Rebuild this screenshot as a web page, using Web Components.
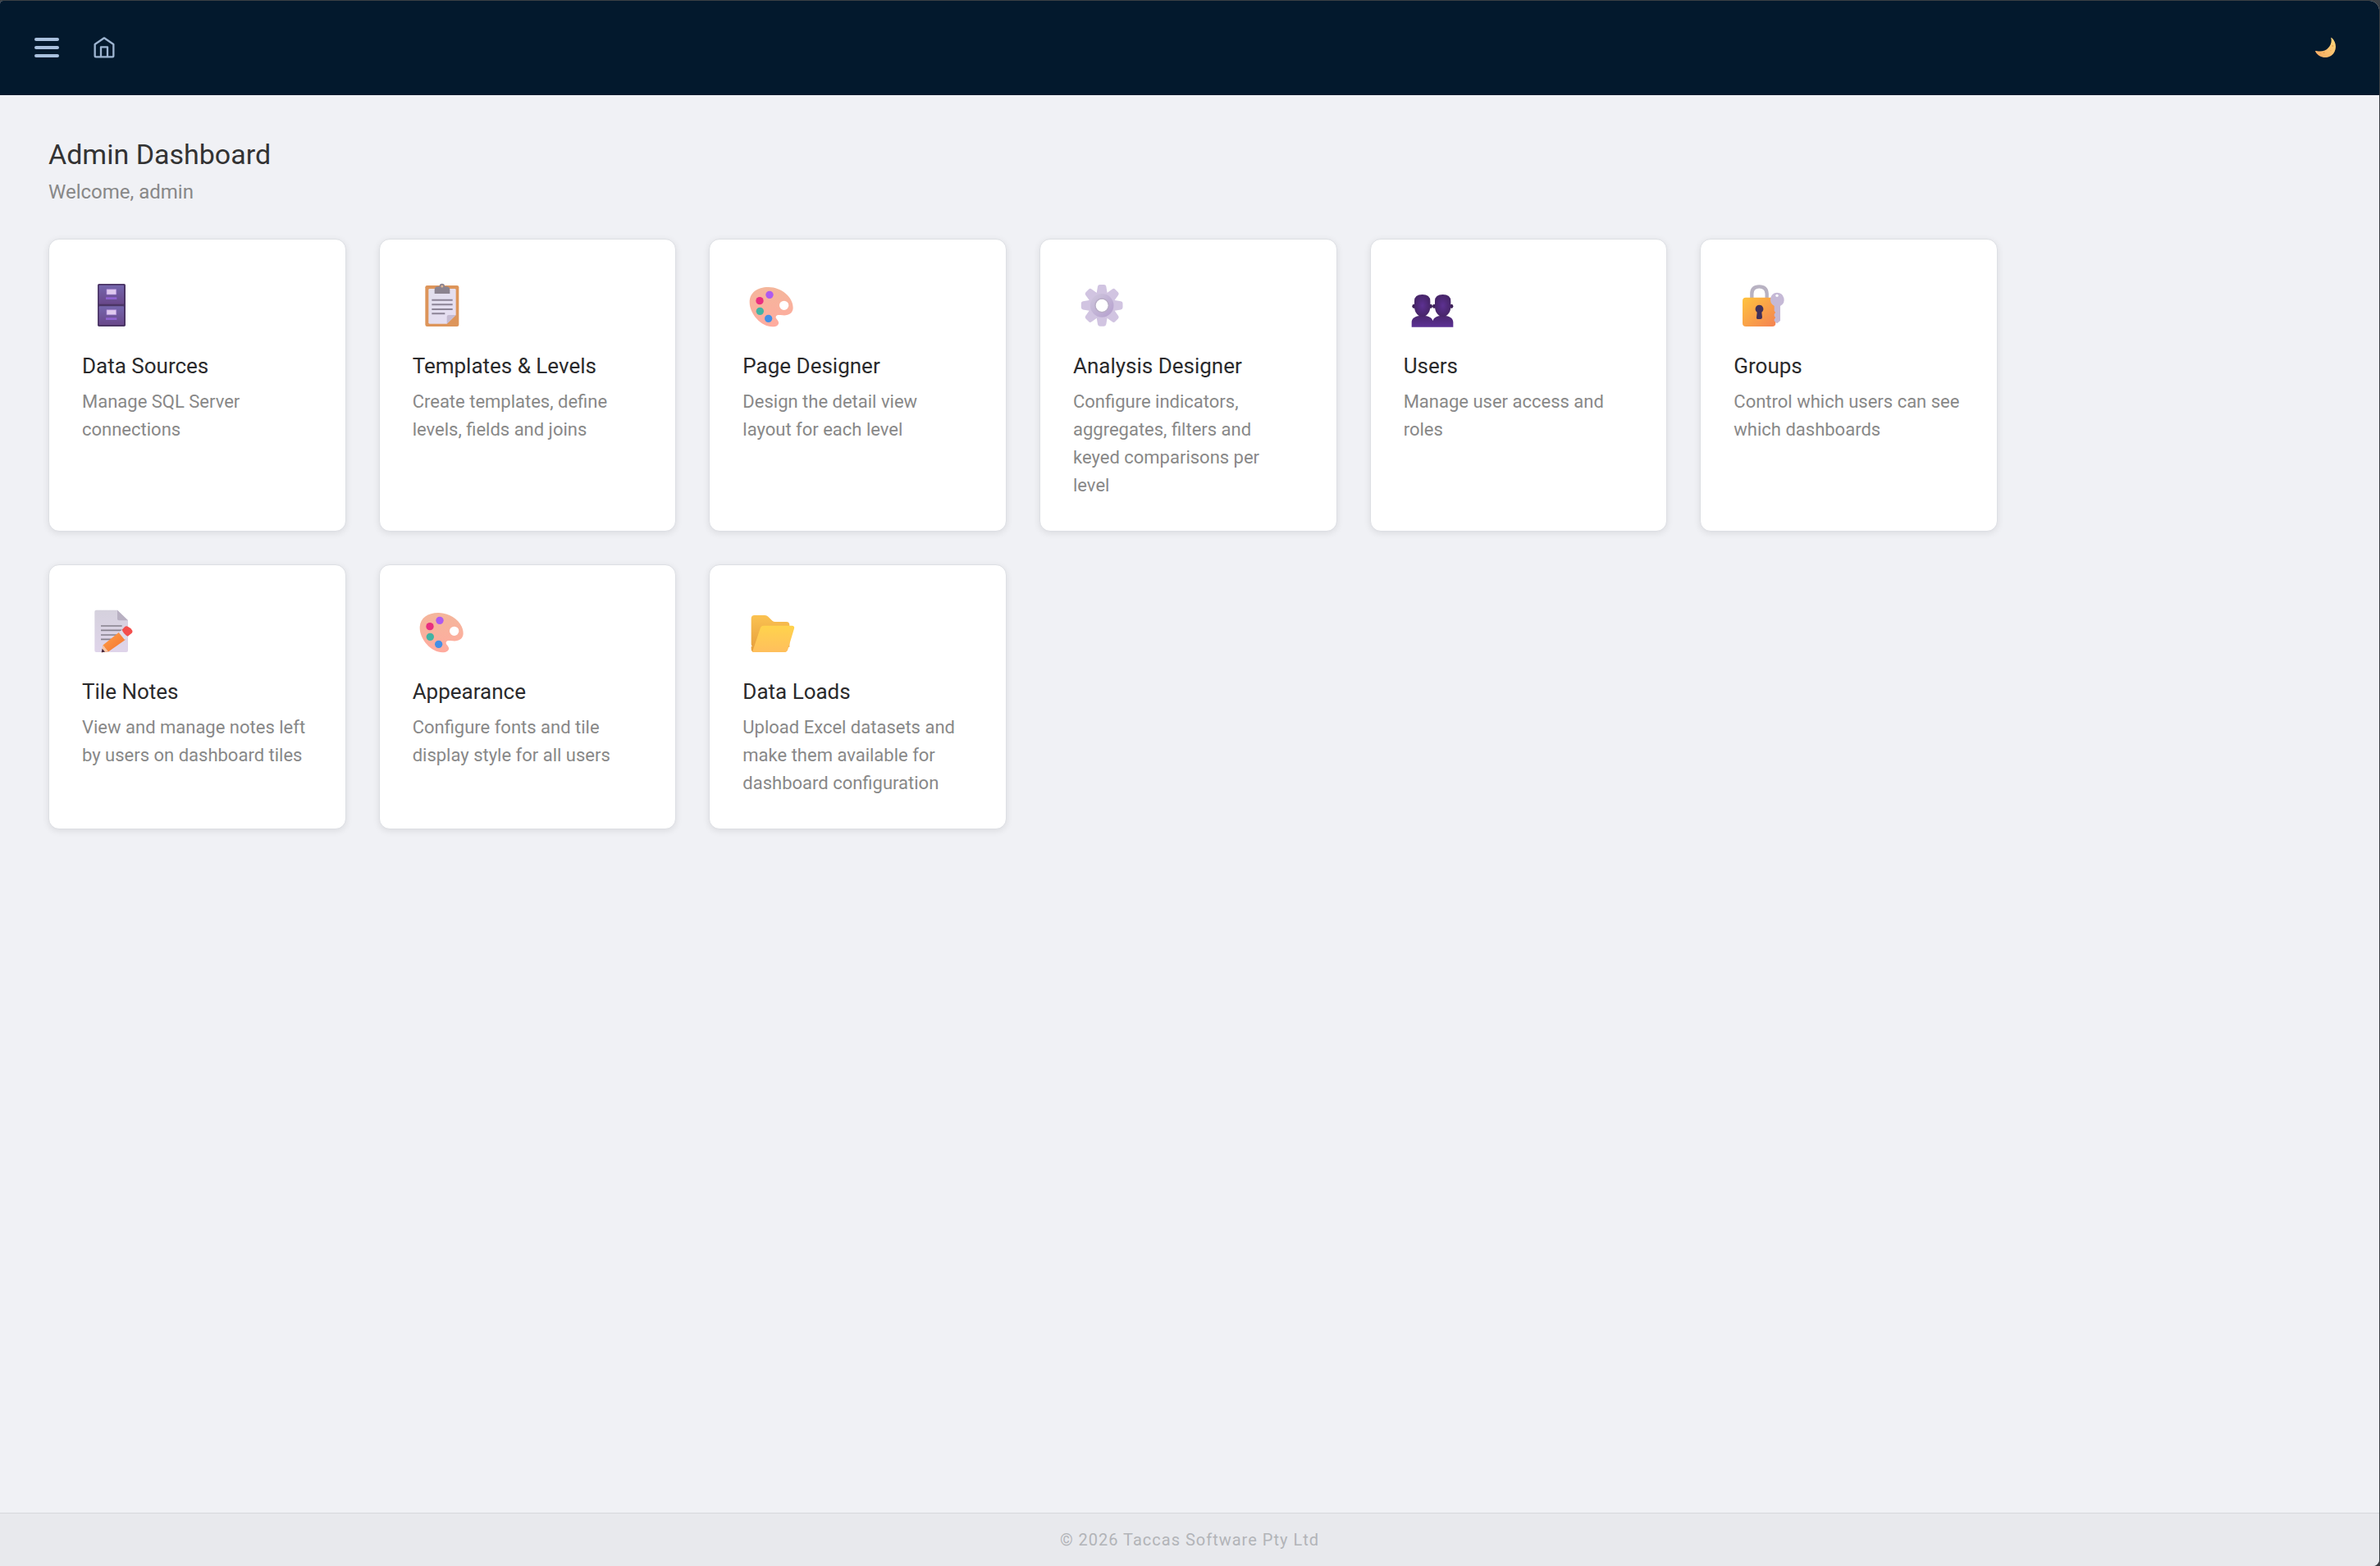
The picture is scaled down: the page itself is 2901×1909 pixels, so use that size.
<!DOCTYPE html>
<html lang="en">
<head>
<meta charset="utf-8">
<meta name="viewport" content="width=device-width, initial-scale=1">
<title>Admin Dashboard</title>
<style>
  :root {
    --color-bar: #03192d;
    --color-bar-icon: #a9c0dd;
    --color-page: #f0f1f5;
    --color-heading: #333;
    --color-muted: #888;
  }

  body {
    margin: 0;
    background: #3a3f44;
    font-family: Roboto, "Liberation Sans", sans-serif;
  }
</style>
</head>
<body>
  <app-shell>
    <app-bar slot="header"></app-bar>
    <page-heading>
      Admin Dashboard
      <span slot="subtitle">Welcome, admin</span>
    </page-heading>
    <tile-grid>
      <admin-tile icon="cabinet" href="#data-sources">Data Sources<span slot="text">Manage SQL Server connections</span></admin-tile>
      <admin-tile icon="clipboard" href="#templates">Templates &amp; Levels<span slot="text">Create templates, define levels, fields and joins</span></admin-tile>
      <admin-tile icon="palette" href="#page-designer">Page Designer<span slot="text">Design the detail view <br>layout for each level</span></admin-tile>
      <admin-tile icon="gear" href="#analysis-designer">Analysis Designer<span slot="text">Configure indicators, aggregates, filters and <br>keyed comparisons per <br>level</span></admin-tile>
      <admin-tile icon="users" href="#users">Users<span slot="text">Manage user access and roles</span></admin-tile>
      <admin-tile icon="lock" href="#groups">Groups<span slot="text">Control which users can see which dashboards</span></admin-tile>
      <admin-tile icon="memo" href="#tile-notes">Tile Notes<span slot="text">View and manage notes left by users on dashboard tiles</span></admin-tile>
      <admin-tile icon="palette" href="#appearance">Appearance<span slot="text">Configure fonts and tile display style for all users</span></admin-tile>
      <admin-tile icon="folder" href="#data-loads">Data Loads<span slot="text">Upload Excel datasets and make them available for dashboard configuration</span></admin-tile>
    </tile-grid>
    <app-footer slot="footer">© 2026 Taccas Software Pty Ltd</app-footer>
  </app-shell>

<script>
const ICONS = {
  cabinet: `
    <svg viewBox="150 153 216 240">
      <defs><linearGradient id="c" x2="0" y2="1"><stop stop-color="#7566ad"/><stop offset="1" stop-color="#69488a"/></linearGradient></defs>
      <rect x="207" y="195" width="102" height="156" rx="5" fill="#4b3565"/>
      <rect x="212" y="200" width="91" height="69" rx="3" fill="url(#c)"/>
      <rect x="212" y="277" width="91" height="68" rx="3" fill="url(#c)"/>
      <path d="M240 215h35v19h-35zM240 290h35v18h-35z" fill="#dfc9ef" stroke="#b08bdc" stroke-width="2"/>
      <path d="M237 248h40M237 323h40" stroke="#8f63d0" stroke-width="8"/>
    </svg>`,
  clipboard: `
    <svg viewBox="8 18 216 240">
      <defs><linearGradient id="p" x2="1" y2="1"><stop stop-color="#e2dfec"/><stop offset="1" stop-color="#e6def3"/></linearGradient></defs>
      <rect x="54" y="66" width="123" height="150" rx="7" fill="#dd955a"/>
      <path d="M70 78h92q4 0 4 4v92l-33 32H70q-4 0-4-4V82q0-4 4-4z" fill="url(#p)"/>
      <path d="M133 206v-26q0-6 6-6h27z" fill="#c5bbd2"/>
      <path d="M88 96V82q0-12 12-12h7a9 9 0 0 1 17 0h7q13 0 13 12v14z" fill="#8b838f"/>
      <circle cx="115.500" cy="69" r="7" fill="#e0b797" stroke="#8b838f" stroke-width="5"/>
      <path d="M78 119h76M78 136h76M78 153h76M78 169h48" stroke="#8c8496" stroke-width="6"/>
    </svg>`,
  palette: `
    <svg viewBox="16 18 216 240">
      <defs><linearGradient id="a" x2="0" y2="1"><stop stop-color="#f4b69b"/><stop offset="1" stop-color="#ffab9f"/></linearGradient></defs>
      <path fill="url(#a)" fill-rule="evenodd" d="M112 72C72 71 42 91 42 127c0 43 42 90 83 90 17 0 25-8 23-17-2-8-11-12-10-19 1-8 11-7 24-6 23 2 39-8 39-27 0-41-43-75-89-76zM168 122a17 17 0 1 1 0 34a17 17 0 1 1 0-34z"/>
      <circle cx="115" cy="100" r="14" fill="#ae5af0"/>
      <circle cx="79" cy="122" r="14" fill="#e92f80"/>
      <circle cx="80" cy="160" r="14" fill="#43b3a3"/>
      <circle cx="111" cy="187" r="14" fill="#438fe6"/>
    </svg>`,
  gear: `
    <svg viewBox="24 18 216 240">
      <defs>
        <linearGradient id="g" x2="1" y2="1"><stop stop-color="#cdc3dc"/><stop offset="1" stop-color="#b7a3cf"/></linearGradient>
        <path id="t" d="M108 106l6-36q1-7 8-7h15q7 0 8 7l6 36z"/>
      </defs>
      <g fill="#d1c4e1">
        <use href="#t"/><use href="#t" transform="rotate(45 129.500 139)"/><use href="#t" transform="rotate(90 129.500 139)"/>
        <use href="#t" transform="rotate(135 129.500 139)"/><use href="#t" transform="rotate(180 129.500 139)"/><use href="#t" transform="rotate(225 129.500 139)"/>
        <use href="#t" transform="rotate(270 129.500 139)"/><use href="#t" transform="rotate(315 129.500 139)"/>
      </g>
      <circle cx="129.500" cy="139" r="33" fill="#fff" stroke="url(#g)" stroke-width="20"/>
      <circle cx="129.500" cy="139" r="25" fill="none" stroke="#b9aec6" stroke-width="4"/>
    </svg>`,
  users: `
    <svg viewBox="32 18 216 240">
      <defs>
        <radialGradient id="u"><stop stop-color="#5d3192"/><stop offset="1" stop-color="#472569"/></radialGradient>
        <linearGradient id="b" x2="0" y2="1"><stop stop-color="#4b276f"/><stop offset="1" stop-color="#5b3094"/></linearGradient>
      </defs>
      <path d="M61 218v-18c0-15 14-24 39-24s39 9 39 24v18zM138 218v-18c0-15 13-24 37-24s38 9 38 24v18z" fill="url(#b)"/>
      <g fill="#3c2057"><ellipse cx="69" cy="142" rx="6" ry="8"/><ellipse cx="131" cy="142" rx="6" ry="8"/><ellipse cx="143" cy="142" rx="6" ry="8"/><ellipse cx="207" cy="142" rx="6" ry="8"/></g>
      <path id="h" d="M71 123q0-24 29-24t29 24v21c0 22-15 36-29 36s-29-14-29-36z" fill="url(#u)"/>
      <use href="#h" x="75"/>
    </svg>`,
  lock: `
    <svg viewBox="40 18 216 240">
      <defs><linearGradient id="l" x2="1" y2="1"><stop stop-color="#ffc33e"/><stop offset="1" stop-color="#f48252"/></linearGradient></defs>
      <path d="M107 117V96q0-26 27-26t28 26v21" fill="none" stroke="#b8b2c2" stroke-width="13"/>
      <rect x="73" y="110" width="121" height="106" rx="12" fill="url(#l)"/>
      <path d="M134 137a15 15 0 0 1 9 27l2 18q0 7-7 7h-8q-7 0-6-7l2-18a15 15 0 0 1 8-27z" fill="#403059"/>
      <path d="M199 92a26 26 0 0 1 12 49v54l-12 10-10-9v-7l5-5-5-6v-8l5-5-5-6v-18a26 26 0 0 1 10-49z" fill="#c5b9d6"/>
      <circle cx="199" cy="103" r="5" fill="#fff"/>
    </svg>`,
  memo: `
    <svg viewBox="30 9 216 240">
      <defs>
        <linearGradient id="m" x2="0" y2="1"><stop stop-color="#d5d1dd"/><stop offset="1" stop-color="#dfd4ea"/></linearGradient>
        <linearGradient id="o" x2="1" y2="1"><stop stop-color="#ffa34b"/><stop offset="1" stop-color="#f4702d"/></linearGradient>
      </defs>
      <path d="M82 53h77l39 38v110q0 6-6 6H82q-6 0-6-6V59q0-6 6-6z" fill="url(#m)"/>
      <path d="M159 53l39 38h-33q-6 0-6-6z" fill="#b8b0c2"/>
      <path d="M99 111h77M99 127h77M99 144h62M99 160h48" stroke="#85808c" stroke-width="5"/>
      <path d="M107 181l60-48 22 28-62 44-25 3z" fill="url(#o)"/>
      <path d="M107 181q8 12 19 24l-25 3z" fill="#f5c6a9"/>
      <path d="M104 194l10 12-13 2z" fill="#46273d"/>
      <path d="M164 135l14-11 22 26-14 12z" fill="#dfdce8"/>
      <path d="M176 125l10-10q5-5 11-2 12 5 17 15 2 5-2 9l-15 12q-15-8-21-24z" fill="#f34f4c"/>
    </svg>`,
  folder: `
    <svg viewBox="16 9 216 240">
      <defs>
        <linearGradient id="f" x2="0" y2="1"><stop stop-color="#fbc251"/><stop offset="1" stop-color="#e8a23f"/></linearGradient>
        <linearGradient id="d" x2="0" y2="1"><stop stop-color="#ffd34c"/><stop offset="1" stop-color="#ffbf5d"/></linearGradient>
      </defs>
      <path d="M60 72h38q7 0 12 5l16 16q4 3 9 3h42q11 0 11 12v80H60q-12 0-12-12V84q0-12 12-12z" fill="url(#f)"/>
      <path d="M48 186v9q0 12 12 12l12-20z" fill="#e8a23f"/>
      <path d="M94 110h102q12 0 9 11l-23 76q-3 10-13 10H52l29-87q3-10 13-10z" fill="url(#d)"/>
    </svg>`
};

class AppShell extends HTMLElement {
  constructor() {
    super();
    this.attachShadow({ mode: 'open' });
    this.shadowRoot.innerHTML = `
      <style>
        :host {
          display: flex;
          flex-direction: column;
          box-sizing: border-box;
          min-height: 100vh;
          padding: 1px 1px 0 0;
        }

        .window {
          flex: 1;
          display: flex;
          flex-direction: column;
          overflow: hidden;
          border-radius: 4px 12px 8px 0;
          background: var(--color-page);
        }

        main {
          flex: 1;
          padding: 50px 59px 59px;
        }
      </style>
      <div class="window">
        <slot name="header"></slot>
        <main><slot></slot></main>
        <slot name="footer"></slot>
      </div>
    `;
  }
}

class AppBar extends HTMLElement {
  constructor() {
    super();
    this.attachShadow({ mode: 'open' });
    this.shadowRoot.innerHTML = `
      <style>
        :host {
          display: block;
          background: var(--color-bar);
        }

        nav {
          display: flex;
          align-items: center;
          gap: 42px;
          box-sizing: border-box;
          height: 115px;
          padding: 0 52px 2px 42px;
        }

        button, a {
          display: block;
          padding: 0;
          border: 0;
          background: none;
          color: var(--color-bar-icon);
          cursor: pointer;
        }

        .menu {
          display: grid;
          gap: 6px;
          width: 30px;
        }

        .menu span {
          height: 4px;
          border-radius: 2px;
          background: currentColor;
        }

        .theme {
          margin-left: auto;
        }

        svg {
          display: block;
        }
      </style>
      <nav>
        <button class="menu" type="button" aria-label="Menu"><span></span><span></span><span></span></button>
        <a href="#home" aria-label="Home">
          <svg width="26" height="26" viewBox="341 135 78 78" fill="none" stroke="#9db4d0" stroke-width="7" stroke-linejoin="round">
            <path d="M346 162l34-23 34 23v42q0 4-4 4h-60q-4 0-4-4z"/>
            <path d="M368 208v-36h24v36"/>
          </svg>
        </a>
        <button class="theme" type="button" aria-label="Dark mode">
          <svg width="27" height="26" viewBox="363 138 81 78">
            <defs><linearGradient id="n" x1="1" x2="0" y2="1"><stop stop-color="#ffd97d"/><stop offset="1" stop-color="#f9a861"/></linearGradient></defs>
            <path d="M424 142q-1-3 3 0c20 18 18 50-2 64-19 13-46 8-58-14-2-3 0-4 3-3 17 4 34 1 44-11 10-11 13-22 10-36z" fill="url(#n)"/>
            <g fill="#e8a551"><circle cx="430" cy="171" r="3"/><circle cx="423" cy="188" r="2"/><circle cx="398" cy="196" r="3"/><circle cx="386" cy="199" r="2"/></g>
          </svg>
        </button>
      </nav>
    `;
  }
}

class PageHeading extends HTMLElement {
  constructor() {
    super();
    this.attachShadow({ mode: 'open' });
    this.shadowRoot.innerHTML = `
      <style>
        :host {
          display: block;
          margin-bottom: 41px;
        }

        h1 {
          margin: 0 0 8px;
          color: var(--color-heading);
          font-size: 34px;
          font-weight: 400;
          line-height: 44px;
        }

        p {
          margin: 0;
          color: var(--color-muted);
          font-size: 24px;
          line-height: 32px;
        }
      </style>
      <h1><slot></slot></h1>
      <p><slot name="subtitle"></slot></p>
    `;
  }
}

class TileGrid extends HTMLElement {
  constructor() {
    super();
    this.attachShadow({ mode: 'open' });
    this.shadowRoot.innerHTML = `
      <style>
        :host {
          display: grid;
          grid-template-columns: repeat(auto-fill, minmax(336px, 1fr));
          gap: 40px;
          max-width: 2376px;
        }
      </style>
      <slot></slot>
    `;
  }
}

class AdminTile extends HTMLElement {
  constructor() {
    super();
    this.attachShadow({ mode: 'open' });
    this.shadowRoot.innerHTML = `
      <style>
        :host {
          display: grid;
        }

        a {
          display: block;
          padding: 40px 38px 38px 40px;
          border: 1px solid #dddfe4;
          border-radius: 13px;
          background: #fff;
          box-shadow: 0 2px 8px rgba(0, 0, 0, 0.09);
          text-decoration: none;
        }

        .icon svg {
          display: block;
          width: 72px;
          height: 80px;
        }

        h2 {
          margin: 19px 0 12px;
          color: #2a2a2c;
          font-size: 26px;
          font-weight: 400;
          line-height: 30px;
        }

        p {
          margin: 0;
          color: var(--color-muted);
          font-size: 22px;
          line-height: 34px;
        }
      </style>
      <a>
        <div class="icon" aria-hidden="true"></div>
        <h2><slot></slot></h2>
        <p><slot name="text"></slot></p>
      </a>
    `;
  }

  connectedCallback() {
    this.shadowRoot.querySelector('a').href = this.getAttribute('href')
    this.shadowRoot.querySelector('.icon').innerHTML = ICONS[this.getAttribute('icon')]
  }
}

class AppFooter extends HTMLElement {
  constructor() {
    super();
    this.attachShadow({ mode: 'open' });
    this.shadowRoot.innerHTML = `
      <style>
        :host {
          display: block;
          border-top: 1px solid #d6d8dc;
          background: #e8e9ed;
        }

        footer {
          padding: 20px;
          color: #b2b4b8;
          font-size: 20px;
          line-height: 24px;
          letter-spacing: 1px;
          text-align: center;
        }
      </style>
      <footer><slot></slot></footer>
    `;
  }
}

customElements.define('app-shell', AppShell)
customElements.define('app-bar', AppBar)
customElements.define('page-heading', PageHeading)
customElements.define('tile-grid', TileGrid)
customElements.define('admin-tile', AdminTile)
customElements.define('app-footer', AppFooter)
</script>
</body>
</html>
